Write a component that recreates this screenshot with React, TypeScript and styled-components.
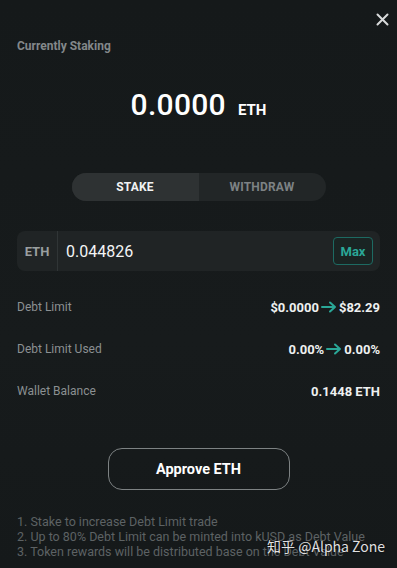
import React from "react";
import styled, { createGlobalStyle } from "styled-components";

const GlobalStyle = createGlobalStyle`
  html, body {
    margin: 0;
    padding: 0;
    background: #161a1b;
  }
  body {
    font-family: Roboto, "Liberation Sans", "Noto Sans CJK SC", sans-serif;
  }
`;

const Modal = styled.div`
  position: relative;
  width: 397px;
  height: 568px;
  box-sizing: border-box;
  padding: 0 17px;
  background: linear-gradient(180deg, #15191a 0%, #171b1c 60%, #15191a 100%);
  display: flex;
  flex-direction: column;
  overflow: hidden;
`;

const TopBar = styled.div`
  height: 38px;
  display: flex;
  justify-content: flex-end;
  align-items: center;
  margin-right: -12px;
`;

const CloseButton = styled.button`
  width: 20px;
  height: 20px;
  padding: 0;
  border: none;
  background: transparent;
  display: flex;
  align-items: center;
  justify-content: center;
  color: #d8dadb;
  cursor: pointer;
`;

const SectionTitle = styled.div`
  font-size: 12px;
  font-weight: 700;
  color: #83888a;
  line-height: 16px;
`;

const StakedAmount = styled.div`
  margin-top: 33px;
  display: flex;
  justify-content: center;
  align-items: baseline;
  gap: 12px;
  color: #ffffff;
`;

const BigNumber = styled.span`
  font-size: 30px;
  font-weight: 500;
  letter-spacing: 0.3px;
`;

const Unit = styled.span`
  font-size: 15px;
  font-weight: 700;
`;

const Tabs = styled.div`
  margin: 51px auto 0;
  width: 254px;
  height: 28px;
  border-radius: 14px;
  overflow: hidden;
  display: grid;
  grid-template-columns: 1fr 1fr;
  background: #222627;
`;

const Tab = styled.div<{ $active?: boolean }>`
  display: flex;
  align-items: center;
  justify-content: center;
  font-size: 12px;
  font-weight: 700;
  letter-spacing: 0.2px;
  color: ${(p) => (p.$active ? "#f2f3f3" : "#7d8284")};
  background: ${(p) => (p.$active ? "#2e3233" : "transparent")};
`;

const InputRow = styled.div`
  margin-top: 30px;
  height: 40px;
  border-radius: 8px;
  background: #202425;
  display: flex;
  align-items: center;
`;

const InputUnit = styled.div`
  width: 40px;
  height: 100%;
  display: flex;
  align-items: center;
  justify-content: center;
  border-right: 1px solid #303536;
  font-size: 13px;
  font-weight: 700;
  color: #9a9fa0;
`;

const InputValue = styled.div`
  flex: 1;
  padding-left: 8px;
  font-size: 16px;
  color: #f4f5f5;
`;

const MaxButton = styled.button`
  margin-right: 7px;
  width: 40px;
  height: 28px;
  box-sizing: border-box;
  border: 1px solid #1d6a62;
  border-radius: 4px;
  background: #1a2423;
  color: #2aa797;
  font-family: inherit;
  font-size: 13px;
  font-weight: 700;
  padding: 0;
`;

const InfoList = styled.div`
  margin-top: 28px;
  display: flex;
  flex-direction: column;
  gap: 26px;
`;

const InfoRow = styled.div`
  height: 16px;
  display: flex;
  justify-content: space-between;
  align-items: center;
`;

const InfoLabel = styled.span`
  font-size: 12px;
  color: #8b9092;
`;

const InfoValue = styled.span`
  display: flex;
  align-items: center;
  gap: 2px;
  font-size: 13px;
  font-weight: 700;
  color: #eef0f0;
`;

const ActionButton = styled.button`
  margin: 49px auto 0;
  width: 182px;
  height: 42px;
  border: 1px solid #7d8283;
  border-radius: 14px;
  background: transparent;
  color: #ffffff;
  font-family: inherit;
  font-size: 14.5px;
  font-weight: 700;
`;

const Notes = styled.ol`
  margin: 24px 0 0;
  padding: 0;
  list-style: none;
  font-size: 12.5px;
  line-height: 15px;
  color: #5d6264;
  white-space: nowrap;
`;

const Watermark = styled.div`
  position: absolute;
  right: 12px;
  bottom: 12px;
  font-family: "Noto Sans CJK SC", "Noto Sans", sans-serif;
  font-size: 14px;
  color: rgba(255, 255, 255, 0.88);
  text-shadow: 0 0 2px rgba(0, 0, 0, 0.5);
`;

const Arrow = () => (
  <svg width="16" height="12" viewBox="0 0 16 12" fill="none">
    <path
      d="M1 6h13M9 1.5L14 6l-5 4.5"
      stroke="#2aa797"
      strokeWidth="2"
      strokeLinecap="round"
      strokeLinejoin="round"
    />
  </svg>
);

const rows = [
  { label: "Debt Limit", from: "$0.0000", to: "$82.29" },
  { label: "Debt Limit Used", from: "0.00%", to: "0.00%" },
  { label: "Wallet Balance", value: "0.1448 ETH" },
];

const notes = [
  "1. Stake to increase Debt Limit trade",
  "2. Up to 80% Debt Limit can be minted into kUSD as Debt Value",
  "3. Token rewards will be distributed base on the Debt Value",
];

export default function App() {
  return (
    <>
      <GlobalStyle />
      <Modal>
        <TopBar>
          <CloseButton aria-label="close">
            <svg width="13" height="13" viewBox="0 0 13 13">
              <path
                d="M1.5 1.5l10 10M11.5 1.5l-10 10"
                stroke="currentColor"
                strokeWidth="2"
                strokeLinecap="round"
              />
            </svg>
          </CloseButton>
        </TopBar>
        <SectionTitle>Currently Staking</SectionTitle>
        <StakedAmount>
          <BigNumber>0.0000</BigNumber>
          <Unit>ETH</Unit>
        </StakedAmount>
        <Tabs>
          <Tab $active>STAKE</Tab>
          <Tab>WITHDRAW</Tab>
        </Tabs>
        <InputRow>
          <InputUnit>ETH</InputUnit>
          <InputValue>0.044826</InputValue>
          <MaxButton>Max</MaxButton>
        </InputRow>
        <InfoList>
          {rows.map((r) => (
            <InfoRow key={r.label}>
              <InfoLabel>{r.label}</InfoLabel>
              {r.value ? (
                <InfoValue>{r.value}</InfoValue>
              ) : (
                <InfoValue>
                  {r.from}
                  <Arrow />
                  {r.to}
                </InfoValue>
              )}
            </InfoRow>
          ))}
        </InfoList>
        <ActionButton>Approve ETH</ActionButton>
        <Notes>
          {notes.map((n) => (
            <li key={n}>{n}</li>
          ))}
        </Notes>
        <Watermark>知乎 @Alpha Zone</Watermark>
      </Modal>
    </>
  );
}
